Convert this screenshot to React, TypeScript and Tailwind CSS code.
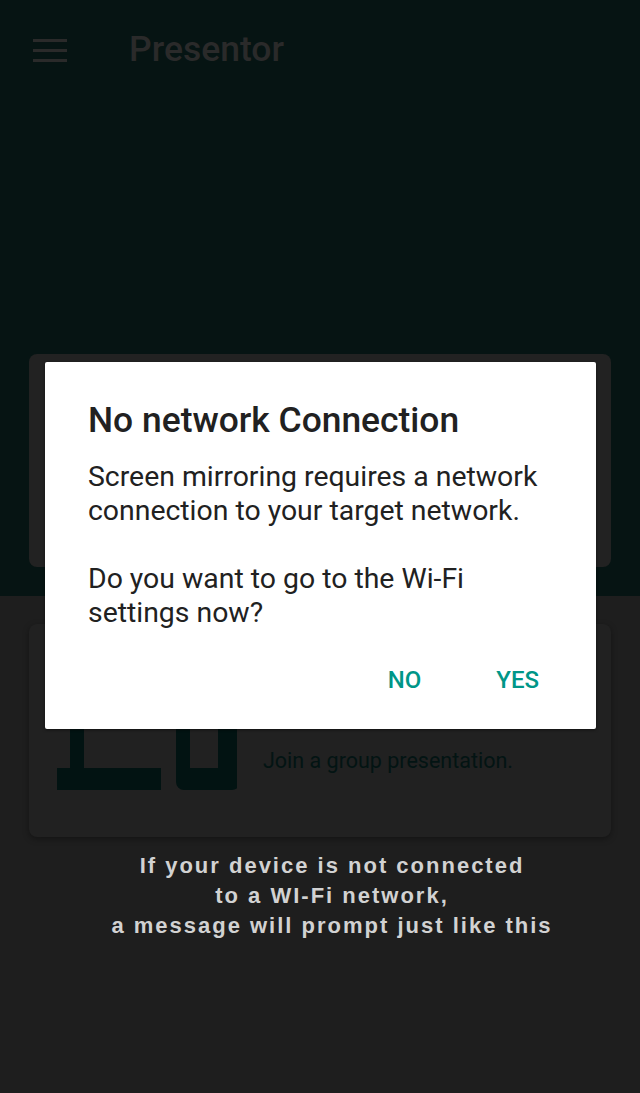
import React from 'react';

const font = { fontFamily: 'Roboto, "Noto Sans", sans-serif' };

const TenIcon: React.FC = () => (
  <svg width="180" height="170" viewBox="0 0 180 170" className="shrink-0">
    {/* "1" */}
    <rect x="13" y="40" width="14" height="124" fill="#021312" />
    <rect x="0" y="142" width="104" height="22" fill="#021312" />
    {/* "0" */}
    <path
      d="M127 40 h48 a8 8 0 0 1 8 8 v108 a8 8 0 0 1 -8 8 h-48 a8 8 0 0 1 -8 -8 v-108 a8 8 0 0 1 8 -8 z M133 54 v88 h28 v-88 z"
      fill="#021312"
      fillRule="evenodd"
    />
  </svg>
);

const App: React.FC = () => {
  return (
    <div className="relative w-full h-[1093px] overflow-hidden bg-[#1e1e1e]" style={font}>
      {/* top dimmed section */}
      <div className="h-[596px] bg-[#061413] flex flex-col">
        <header className="flex items-center h-[100px] pl-[33px]">
          <div className="flex flex-col gap-[7px] w-[34px]">
            <span className="block h-[3px] bg-[#2a2a2a]" />
            <span className="block h-[3px] bg-[#2a2a2a]" />
            <span className="block h-[3px] bg-[#2a2a2a]" />
          </div>
          <span className="ml-[62px] text-[35.5px] font-medium text-[#2a2a2a] leading-none">Presentor</span>
        </header>
        <div className="mx-[29px] mt-[254px] h-[213px] rounded-[8px] bg-[#222222]" />
      </div>

      {/* lower section */}
      <div className="pt-[28px] flex flex-col">
        <div className="mx-[29px] h-[213px] rounded-[8px] bg-[#212121] shadow-[0_2px_6px_rgba(0,0,0,0.35)] flex items-end pb-[41px] pl-[28px]">
          <TenIcon />
          <span className="ml-[26px] mb-[19px] text-[21.5px] text-[#031413]">Join a group presentation.</span>
        </div>
        <p
          className="mt-[14px] pl-[24px] text-center text-[22px] leading-[30px] font-bold tracking-[2px] text-[#d2d2d2]"
          style={{ fontFamily: '"Liberation Sans", Arial, sans-serif' }}
        >
          If your device is not connected
          <br />
          to a WI-Fi network,
          <br />
          a message will prompt just like this
        </p>
      </div>

      {/* dialog */}
      <div className="absolute left-[45px] top-[362px] w-[551px] h-[367px] bg-white rounded-[2px] shadow-[0_1px_3px_rgba(0,0,0,0.5)] pl-[43px] pt-[38px] flex flex-col">
        <h2 className="text-[35.4px] leading-[40px] font-medium text-[#212121]">No network Connection</h2>
        <div className="mt-[20px] text-[28.4px] leading-[34px] text-[#212121]">
          <p>
            Screen mirroring requires a network
            <br />
            connection to your target network.
          </p>
          <p className="mt-[34px]">
            Do you want to go to the Wi-Fi
            <br />
            settings now?
          </p>
        </div>
        <div className="mt-[38px] flex justify-end gap-[75px] pr-[57px] text-[24px] leading-[24px] font-medium text-[#009688]">
          <button>NO</button>
          <button>YES</button>
        </div>
      </div>
    </div>
  );
};

export default App;
